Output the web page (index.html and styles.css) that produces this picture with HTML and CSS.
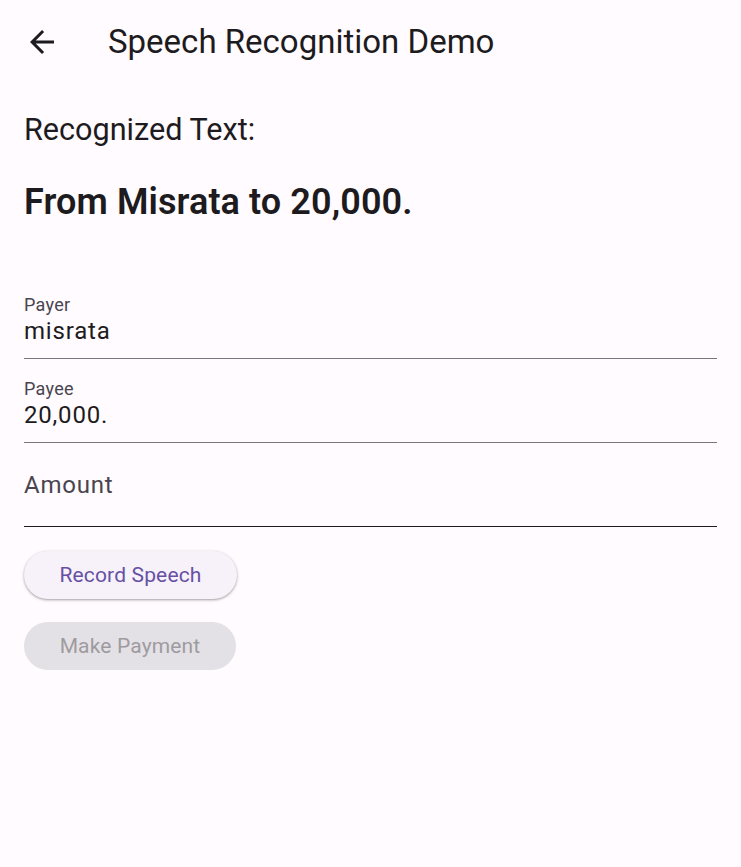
FILE: index.html
```html
<!DOCTYPE html>
<html>
<head>
<meta charset="utf-8">
<link rel="stylesheet" href="styles.css">
</head>
<body>
<header class="appbar">
  <button class="back" aria-label="Back">
    <svg width="36" height="36" viewBox="0 0 24 24"><path d="M20 11H7.83l5.59-5.59L12 4l-8 8 8 8 1.41-1.41L7.83 13H20v-2z" fill="#1D1B20"/></svg>
  </button>
  <h1 class="title">Speech Recognition Demo</h1>
</header>
<main class="content">
  <p class="label-heading">Recognized Text:</p>
  <p class="recognized">From Misrata to 20,000.</p>
  <div class="fields">
    <div class="field filled">
      <span class="field-label">Payer</span>
      <span class="field-value">misrata</span>
    </div>
    <div class="field filled">
      <span class="field-label">Payee</span>
      <span class="field-value">20,000.</span>
    </div>
    <div class="field empty dark">
      <span class="field-placeholder">Amount</span>
    </div>
  </div>
  <div class="buttons">
    <button class="btn btn-elevated">Record Speech</button>
    <button class="btn btn-disabled" disabled>Make Payment</button>
  </div>
</main>
</body>
</html>
```
FILE: styles.css
```css
* { box-sizing: border-box; }
html, body {
  margin: 0;
  padding: 0;
  background: #FFFBFE;
  font-family: Roboto, "Noto Sans", sans-serif;
  color: #1D1B20;
}
.appbar {
  height: 84px;
  display: flex;
  align-items: center;
  padding-left: 6px;
}
.back {
  width: 72px;
  height: 72px;
  border: 0;
  background: transparent;
  padding: 0;
  display: flex;
  align-items: center;
  justify-content: center;
  margin-right: 30px;
}
.back svg { display: block; }
.title {
  margin: 0;
  font-size: 33px;
  font-weight: 400;
  line-height: 42px;
  letter-spacing: 0;
}
.content {
  padding: 24px 24px;
}
.label-heading {
  margin: 0;
  font-size: 30.6px;
  line-height: 44px;
}
.recognized {
  margin: 26px 0 0;
  font-size: 36px;
  font-weight: 600;
  line-height: 48px;
  letter-spacing: 0.1px;
}
.fields {
  margin-top: 49px;
  display: flex;
  flex-direction: column;
}
.field {
  height: 84px;
  border-bottom: 1.5px solid #79747E;
  display: flex;
  flex-direction: column;
  justify-content: flex-end;
  padding-bottom: 12px;
}
.field.dark { border-bottom-color: #1D1B20; }
.field-label {
  font-size: 18px;
  line-height: 22px;
  color: #49454F;
  letter-spacing: 0.3px;
}
.field-value {
  font-size: 24px;
  line-height: 30px;
  letter-spacing: 0.8px;
  color: #1D1B20;
}
.field-placeholder {
  font-size: 24px;
  line-height: 30px;
  letter-spacing: 0.8px;
  color: #49454F;
  margin-bottom: 14px;
}
.buttons {
  margin-top: 24px;
  display: flex;
  flex-direction: column;
  align-items: flex-start;
  gap: 23px;
}
.btn {
  height: 48px;
  border: 0;
  border-radius: 24px;
  padding: 0;
  white-space: nowrap;
  font-family: Roboto, "Noto Sans", sans-serif;
  font-size: 21px;
  letter-spacing: 0.15px;
  font-weight: 400;
  width: 213px;
}
.btn-elevated {
  background: #F7F2FA;
  color: #6750A4;
  box-shadow: 0 1px 2px rgba(0,0,0,0.25), 0 1px 3px 1px rgba(0,0,0,0.1);
}
.btn-disabled {
  background: #E4E1E6;
  color: #9E9BA0;
  width: 212px;
}
```
